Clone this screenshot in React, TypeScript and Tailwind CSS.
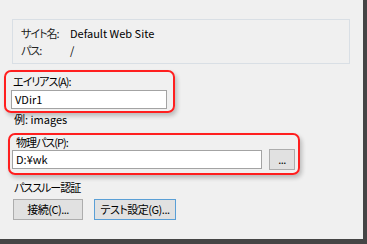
import React from 'react';

const font = "font-['Noto_Sans_CJK_JP','Noto_Sans',sans-serif] [font-feature-settings:'palt']";

const Field: React.FC<{ value: string; className: string }> = ({ value, className }) => (
  <div className={`h-[19px] border border-[#a3a3a3] bg-white pl-[3px] leading-[17px] ${className}`}>
    {value}
  </div>
);

const Button: React.FC<{ label: string; className: string; focused?: boolean }> = ({ label, className, focused }) => (
  <div
    className={`h-[21px] flex items-center justify-center whitespace-nowrap bg-[#e1e1e1] border tracking-[-0.5px] ${
      focused ? 'border-[#5a9fd6]' : 'border-[#adadad]'
    } ${className}`}
  >
    {label}
  </div>
);

const jp = 'tracking-[-1px]';

export default function App() {
  return (
    <div className={`w-[367px] h-[244px] bg-[#f0f0f0] border-r-4 border-b-[5px] border-[#454545] flex flex-col text-[11px] text-black whitespace-nowrap ${font}`}>
      {/* site info group */}
      <div className="mt-[19px] ml-[12px] w-[338px] h-[45px] border border-[#d9dfe5] pl-[8px] pt-[5px]">
        <div className="flex h-[17px] leading-[17px]">
          <span className={`w-[49px] shrink-0 text-[#222] ${jp}`}>サイト名:</span>
          <span>Default Web Site</span>
        </div>
        <div className="flex h-[17px] leading-[17px]">
          <span className={`w-[49px] shrink-0 text-[#222] ${jp}`}>パス:</span>
          <span>/</span>
        </div>
      </div>

      {/* alias */}
      <div className="mt-[6px] ml-[4px] w-[171px] h-[43px] border-2 border-[#ff1f1f] rounded-[7px] shadow-[2px_3px_4px_rgba(0,0,0,0.22)] pl-[5px] pt-[1px]">
        <div className={`h-[16px] leading-[16px] pl-[2px] ${jp}`}>エイリアス(A):</div>
        <Field value="VDir1" className="mt-[1px] w-[156px]" />
      </div>

      <div className="h-[12px] leading-[12px] pl-[14px]">例: images</div>

      {/* physical path */}
      <div className="mt-[8px] ml-[8px] w-[292px] h-[42px] border-2 border-[#ff1f1f] rounded-[7px] shadow-[2px_3px_4px_rgba(0,0,0,0.22)] pl-[2px]">
        <div className={`h-[14px] leading-[14px] pl-[4px] ${jp}`}>物理パス(P):</div>
        <div className="flex items-start">
          <Field value="D:¥wk" className="mt-[1px] w-[250px]" />
          <Button label="..." className="ml-[7px] w-[26px] h-[20px]" />
        </div>
      </div>

      <div className={`mt-[4px] ml-[14px] h-[16px] leading-[16px] ${jp}`}>パススルー認証</div>

      <div className="mt-[4px] ml-[13px] flex gap-[11px]">
        <Button label="接続(C)..." className="w-[70px]" />
        <Button label="テスト設定(G)..." className="w-[82px]" focused />
      </div>
    </div>
  );
}
